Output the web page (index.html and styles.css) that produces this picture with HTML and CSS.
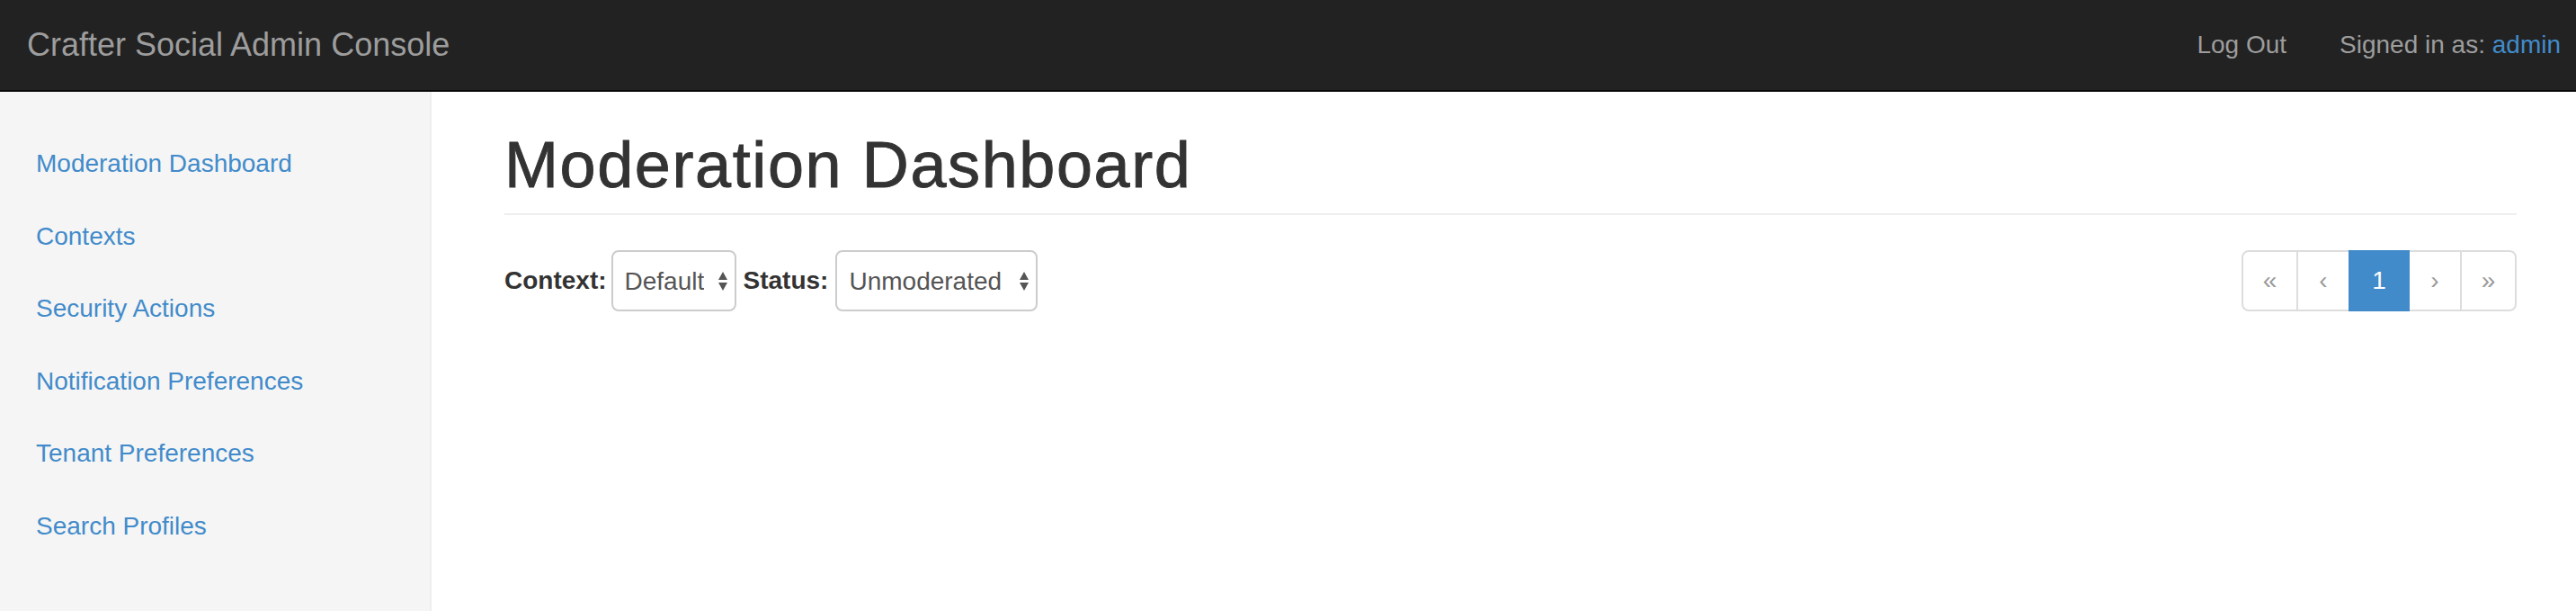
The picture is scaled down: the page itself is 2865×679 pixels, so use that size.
FILE: index.html
```html
<!DOCTYPE html>
<html lang="en">
<head>
<meta charset="utf-8">
<title>Crafter Social Admin Console</title>
<link rel="stylesheet" href="styles.css">
</head>
<body>
<header class="navbar">
  <a class="brand" href="#">Crafter Social Admin Console</a>
  <nav class="nav-right">
    <a class="nav-link" href="#">Log Out</a>
    <span class="nav-text">Signed in as: <a class="user" href="#">admin</a></span>
  </nav>
</header>
<div class="layout">
  <aside class="sidebar">
    <ul class="side-nav">
      <li><a href="#">Moderation Dashboard</a></li>
      <li><a href="#">Contexts</a></li>
      <li><a href="#">Security Actions</a></li>
      <li><a href="#">Notification Preferences</a></li>
      <li><a href="#">Tenant Preferences</a></li>
      <li><a href="#">Search Profiles</a></li>
    </ul>
  </aside>
  <main class="main">
    <h1 class="page-header">Moderation Dashboard</h1>
    <div class="toolbar">
      <form class="filters">
        <label class="filter-label" for="ctx">Context:</label>
        <span class="select-wrap">
          <select id="ctx" class="select select-ctx">
            <option>Default</option>
          </select>
          <svg class="select-arrows" width="12" height="23" viewBox="0 0 12 23"><path d="M1 10 L6 1 L11 10 Z M1 13 L11 13 L6 22 Z" fill="#555"/></svg>
        </span>
        <label class="filter-label filter-label-status" for="status">Status:</label>
        <span class="select-wrap">
          <select id="status" class="select select-status">
            <option>Unmoderated</option>
            <option>Pending</option>
            <option>Approved</option>
            <option>Spam</option>
          </select>
          <svg class="select-arrows" width="12" height="23" viewBox="0 0 12 23"><path d="M1 10 L6 1 L11 10 Z M1 13 L11 13 L6 22 Z" fill="#555"/></svg>
        </span>
      </form>
      <ul class="pagination">
        <li class="pg pg-edge pg-first"><span>&laquo;</span></li>
        <li class="pg pg-step"><span>&lsaquo;</span></li>
        <li class="pg pg-num active"><span>1</span></li>
        <li class="pg pg-step"><span>&rsaquo;</span></li>
        <li class="pg pg-edge pg-last"><span>&raquo;</span></li>
      </ul>
    </div>
  </main>
</div>
</body>
</html>
```
FILE: styles.css
```css
* { box-sizing: border-box; }

html, body {
  margin: 0;
  padding: 0;
  height: 100%;
}

body {
  font-family: "Liberation Sans", Arial, Helvetica, sans-serif;
  font-size: 28px;
  line-height: 40px;
  color: #333;
  background: #fff;
}

a { text-decoration: none; }

/* Navbar */
.navbar {
  height: 102px;
  background: #222;
  border-bottom: 2px solid #080808;
  display: flex;
  align-items: center;
  justify-content: space-between;
  padding: 0 17px 0 30px;
}

.brand {
  color: #9d9d9d;
  font-size: 36px;
  line-height: 40px;
}

.nav-right {
  display: flex;
  align-items: center;
  gap: 59px;
}

.nav-link,
.nav-text {
  color: #9d9d9d;
  font-size: 28px;
  line-height: 40px;
}

.user { color: #428bca; }

/* Layout */
.layout {
  display: flex;
  min-height: calc(100vh - 102px);
}

.sidebar {
  width: 480px;
  flex: 0 0 480px;
  background: #f5f5f5;
  border-right: 2px solid #eee;
  padding-top: 40px;
}

.side-nav {
  list-style: none;
  margin: 0;
  padding: 0;
}

.side-nav a {
  display: block;
  padding: 20px 40px;
  line-height: 40.5px;
  color: #428bca;
}

.main {
  flex: 1;
  padding: 42px 66px 0 81px;
}

.page-header {
  margin: 0;
  font-size: 72px;
  line-height: 79px;
  font-weight: 500;
  letter-spacing: 1.6px;
  -webkit-text-stroke: 0.9px #333;
  color: #333;
  padding-bottom: 14px;
  border-bottom: 2px solid #eee;
}

.toolbar {
  margin-top: 39px;
  display: flex;
  justify-content: space-between;
  align-items: center;
}

.filters {
  display: flex;
  align-items: center;
  margin: 0;
}

.filter-label {
  font-weight: bold;
  font-size: 28px;
  color: #333;
  margin-right: 5px;
}

.filter-label-status { margin-right: 8px; }

.select-wrap {
  position: relative;
  display: inline-block;
  height: 68px;
  margin-right: 8px;
}

.select {
  -webkit-appearance: none;
  appearance: none;
  height: 68px;
  border: 2px solid #ccc;
  border-radius: 8px;
  background: #fff;
  color: #555;
  font-family: "Liberation Sans", Arial, Helvetica, sans-serif;
  font-size: 28px;
  padding: 0 34px 0 13px;
  margin: 0;
  outline: none;
}

.select-ctx { width: 139px; }
.select-status { width: 225px; }

.select-arrows {
  position: absolute;
  right: 9px;
  top: 23px;
  pointer-events: none;
}

/* Pagination */
.pagination {
  list-style: none;
  margin: 0;
  padding: 0;
  display: flex;
}

.pg {
  height: 68px;
  border: 2px solid #ddd;
  margin-left: -2px;
  display: flex;
  align-items: center;
  justify-content: center;
  color: #999;
  background: #fff;
  font-size: 28px;
}

.pg-first {
  margin-left: 0;
  border-radius: 8px 0 0 8px;
}

.pg-last { border-radius: 0 8px 8px 0; }

.pg-edge { width: 63px; }
.pg-step { width: 60px; }
.pg-num { width: 68px; }

.pg.active {
  background: #428bca;
  border-color: #428bca;
  color: #fff;
  position: relative;
  z-index: 1;
}
```
